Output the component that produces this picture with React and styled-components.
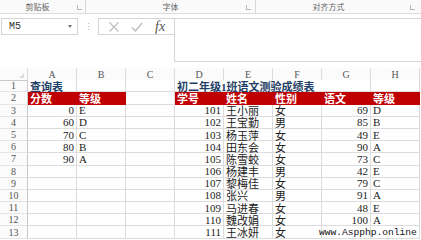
import React from "react"
import styled, { createGlobalStyle } from "styled-components"

const Global = createGlobalStyle`
  html, body { margin: 0; padding: 0; background: #fff; }
  body { width: 421px; height: 240px; overflow: hidden; font-family: "Liberation Serif", "Noto Sans CJK SC", serif; }
`

const Page = styled.div`
  position: relative;
  width: 421px;
  height: 240px;
  overflow: hidden;
  background: #fff;
`

const Ribbon = styled.div`
  display: flex;
  height: 13px;
  border-bottom: 1px solid #dcdcdc;
  background: #fafafa;
`

const Group = styled.div`
  position: relative;
  display: flex;
  align-items: center;
  justify-content: center;
  width: ${p => p.w}px;
  box-sizing: border-box;
  border-right: ${p => p.sep ? "1px solid #d8d8d8" : "none"};
  font-family: "Noto Sans CJK SC", sans-serif;
  font-size: 8px;
  color: #666;
  padding-right: ${p => p.pr || 0}px;
`

const Launcher = styled.span`
  position: absolute;
  right: ${p => p.r}px;
  top: 5px;
  width: 4px;
  height: 4px;
  border-left: 1px solid #999;
  border-bottom: 1px solid #999;
  opacity: .7;
`

const FormulaBar = styled.div`
  display: flex;
  align-items: flex-start;
  height: 52px;
  padding-top: 4px;
  box-sizing: border-box;
`

const NameBox = styled.div`
  display: flex;
  align-items: center;
  justify-content: space-between;
  width: 77px;
  height: 17px;
  margin-left: 1px;
  padding: 0 5px 0 7px;
  box-sizing: border-box;
  border: 1px solid #d4d4d4;
  font-family: "Liberation Mono", monospace;
  font-size: 10px;
  color: #333;
`

const Caret = styled.span`
  width: 0;
  height: 0;
  border-left: 2px solid transparent;
  border-right: 2px solid transparent;
  border-top: 3px solid #777;
`

const Dots = styled.div`
  width: 20px;
  height: 17px;
  display: flex;
  align-items: center;
  justify-content: center;
  color: #aaa;
  font-size: 9px;
  font-family: "Liberation Sans", sans-serif;
`

const ToolBox = styled.div`
  display: flex;
  align-items: center;
  justify-content: space-around;
  width: 76px;
  height: 17px;
  padding: 0 3px;
  box-sizing: border-box;
  border: 1px solid #d4d4d4;
  border-right: none;
`

const Fx = styled.span`
  font-family: "Liberation Serif", serif;
  font-style: italic;
  font-size: 14px;
  color: #555;
  line-height: 1;
`

const Input = styled.div`
  flex: 1;
  height: 42px;
  border: 1px solid #d4d4d4;
  border-right: none;
`

const Sheet = styled.div`
  display: grid;
  grid-template-columns: 28px repeat(8, 49px);
  grid-auto-rows: 12.2px;
  margin-top: 2px;
`

const ColHead = styled.div`
  height: 13px;
  display: flex;
  align-items: center;
  justify-content: center;
  border-right: 1px solid #dcdcdc;
  border-bottom: 1px solid #c8c8c8;
  box-sizing: border-box;
  font-size: 10px;
  color: #555;
  background: #fbfbfb;
  position: relative;
`

const Corner = styled.span`
  position: absolute;
  right: 3px;
  bottom: 2px;
  width: 0;
  height: 0;
  border-left: 5px solid transparent;
  border-bottom: 5px solid #ddd;
`

const RowHead = styled.div`
  display: flex;
  align-items: center;
  justify-content: center;
  border-right: 1px solid #c8c8c8;
  border-bottom: 1px solid #e4e4e4;
  box-sizing: border-box;
  font-size: 10px;
  color: #555;
  background: #fbfbfb;
`

const Cell = styled.div`
  display: flex;
  align-items: center;
  justify-content: ${p => p.right ? "flex-end" : "flex-start"};
  padding: 0 2px;
  box-sizing: border-box;
  border-right: 1px solid ${p => p.head ? "#c00000" : p.open ? "transparent" : "#dcdcdc"};
  border-bottom: 1px solid ${p => p.head ? "#c00000" : "#dcdcdc"};
  background: ${p => p.head ? "#c00000" : "#fff"};
  color: ${p => p.head ? "#fff" : p.title ? "#1f3f66" : "#222"};
  font-weight: ${p => p.head || p.title ? 700 : 400};
  font-size: 11px;
  white-space: nowrap;
  overflow: visible;
  position: relative;
  z-index: ${p => p.title ? 1 : 0};
`

const Watermark = styled.div`
  position: absolute;
  left: 319px;
  top: 227px;
  font-family: "Liberation Mono", monospace;
  font-size: 9.6px;
  color: #111;
  z-index: 5;
`

const Cross = () => (
  <svg width="12" height="12" viewBox="0 0 12 12">
    <path d="M1.5 1.5 L10.5 10.5 M10.5 1.5 L1.5 10.5" stroke="#bdbdbd" strokeWidth="1.2" fill="none" />
  </svg>
)

const Check = () => (
  <svg width="12" height="12" viewBox="0 0 12 12">
    <path d="M1 6.5 L4.5 10 L11 2" stroke="#bdbdbd" strokeWidth="1.4" fill="none" />
  </svg>
)

const lookup = [[0, "E"], [60, "D"], [70, "C"], [80, "B"], [90, "A"]]

const students = [
  [101, "王小丽", "女", 69, "D"],
  [102, "王宝勤", "男", 85, "B"],
  [103, "杨玉萍", "女", 49, "E"],
  [104, "田东会", "女", 90, "A"],
  [105, "陈雪蛟", "女", 73, "C"],
  [106, "杨建丰", "男", 42, "E"],
  [107, "黎梅佳", "女", 79, "C"],
  [108, "张兴", "男", 91, "A"],
  [109, "马进春", "女", 48, "E"],
  [110, "魏改娟", "女", 100, "A"],
  [111, "王冰妍", "女", "", ""],
]

const cols = ["A", "B", "C", "D", "E", "F", "G", "H"]

function rowCells(r) {
  if (r === 1) {
    return [
      <Cell key="a" title={1}>查询表</Cell>, <Cell key="b" />, <Cell key="c" />,
      <Cell key="d" title={1} open={1}>初二年级1班语文测验成绩表</Cell>,
      <Cell key="e" open={1} />, <Cell key="f" open={1} />, <Cell key="g" />, <Cell key="h" />,
    ]
  }
  if (r === 2) {
    return [
      <Cell key="a" head={1}>分数</Cell>, <Cell key="b" head={1}>等级</Cell>, <Cell key="c" />,
      <Cell key="d" head={1}>学号</Cell>, <Cell key="e" head={1}>姓名</Cell>,
      <Cell key="f" head={1}>性别</Cell>, <Cell key="g" head={1}>语文</Cell>, <Cell key="h" head={1}>等级</Cell>,
    ]
  }
  const l = lookup[r - 3]
  const s = students[r - 3]
  return [
    <Cell key="a" right={1}>{l ? l[0] : ""}</Cell>,
    <Cell key="b">{l ? l[1] : ""}</Cell>,
    <Cell key="c" />,
    <Cell key="d" right={1}>{s ? s[0] : ""}</Cell>,
    <Cell key="e">{s ? s[1] : ""}</Cell>,
    <Cell key="f">{s ? s[2] : ""}</Cell>,
    <Cell key="g" right={1}>{s ? s[3] : ""}</Cell>,
    <Cell key="h">{s ? s[4] : ""}</Cell>,
  ]
}

export default function App() {
  const rows = Array.from({ length: 13 }, (_, i) => i + 1)
  return (
    <Page>
      <Global />
      <Ribbon>
        <Group w={86} sep={1} pr={10}>剪贴板<Launcher r={3} /></Group>
        <Group w={170} sep={1}>字体<Launcher r={4} /></Group>
        <Group w={165} pr={20}>对齐方式<Launcher r={6} /></Group>
      </Ribbon>
      <FormulaBar>
        <NameBox>M5<Caret /></NameBox>
        <Dots>⋮</Dots>
        <ToolBox><Cross /><Check /><Fx>fx</Fx></ToolBox>
        <Input />
      </FormulaBar>
      <Sheet>
        <ColHead><Corner /></ColHead>
        {cols.map(c => <ColHead key={c}>{c}</ColHead>)}
        {rows.map(r => (
          <React.Fragment key={r}>
            <RowHead>{r}</RowHead>
            {rowCells(r)}
          </React.Fragment>
        ))}
      </Sheet>
      <Watermark>www.Aspphp.online</Watermark>
    </Page>
  )
}
